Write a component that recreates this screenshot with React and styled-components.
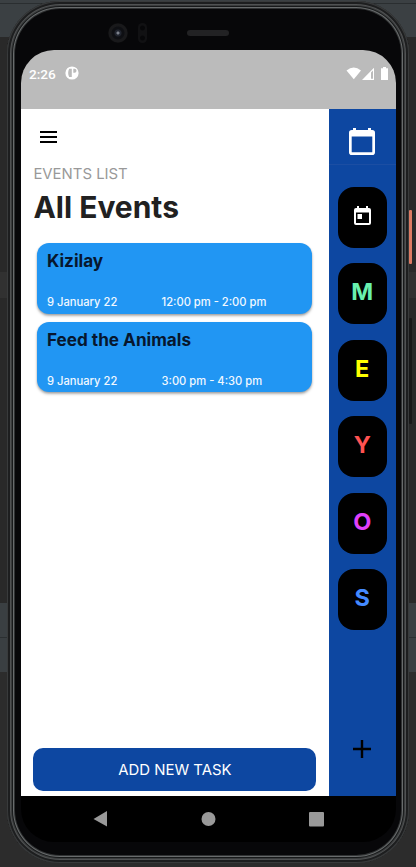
import React from 'react';
import styled, { createGlobalStyle } from 'styled-components';

const GlobalStyle = createGlobalStyle`
  * { box-sizing: border-box; }
  body { margin: 0; background: #2b2b2b; font-family: Inter, sans-serif; overflow: hidden; }
  h1, h2, p { margin: 0; }
  button { border: 0; padding: 0; font-family: inherit; }
`;

const Desktop = styled.div`
  position: relative;
  width: 416px;
  height: 867px;
  padding: 1px 7px 4px;
  background: linear-gradient(
    #3b4043 0 3px, #2a2e30 3px 4px, #3b4043 4px 37px, #292929 37px 272px,
    #313131 272px 298px, #292929 298px 603px, #3a3f42 603px 637px,
    #2b2f31 637px 638px, #3a3f42 638px 672px, #2c2c2c 672px
  );
`;

const SideKey = styled.span`
  position: absolute;
  left: ${(p) => p.$left}px;
  top: ${(p) => p.$top}px;
  width: ${(p) => p.$width}px;
  height: ${(p) => p.$height}px;
  background: ${(p) => p.$color};
  border-radius: 1px;
`;

const Phone = styled.div`
  position: relative;
  display: flex;
  flex-direction: column;
  width: 402px;
  height: 862px;
  padding: 0 13px 20px 14px;
  background: #070709;
  border-radius: 53px;
  box-shadow:
    inset 0 0 0 1px #393b3c,
    inset 0 0 0 3px #1d1e1f,
    inset 0 0 0 4px #505253,
    inset 0 0 0 5px #3a3c3d,
    inset 0 0 0 6px #17191a,
    inset 0 0 0 7px #686b6c,
    inset 0 0 0 8px #303233;
`;

const Bezel = styled.div`
  display: flex;
  align-items: center;
  height: 49px;
  padding: 15px 0 0 87px;
`;

const Camera = styled.span`
  width: 20px;
  height: 20px;
  border-radius: 50%;
  background: radial-gradient(circle, #7d828d 0 1px, #20242e 2px 3px, #0e0f13 4px 6px, #19191b 7px 9px, #0c0c0d 10px);
`;

const Sensor = styled.span`
  width: 9px;
  height: 20px;
  margin-left: 10px;
  border-radius: 5px;
  background: radial-gradient(circle at 50% 25%, #070709 0 2px, transparent 3px),
    radial-gradient(circle at 50% 75%, #070709 0 2px, transparent 3px), #111113;
`;

const Speaker = styled.span`
  width: 42px;
  height: 6px;
  margin-left: 40px;
  border-radius: 3px;
  background: #222224;
`;

const Screen = styled.div`
  display: flex;
  flex-direction: column;
  width: 375px;
  height: 792px;
  border-radius: 33px;
  overflow: hidden;
  background: #000;
`;

const StatusBar = styled.header`
  display: flex;
  align-items: flex-start;
  flex: 0 0 59px;
  padding: 16px 0 0 8px;
  background: #bbb;
  color: #fff;
  font: 500 13.6px/16px Roboto, sans-serif;
`;

const ParkingIcon = styled.svg`
  width: 14px;
  height: 14px;
  margin: 0 0 0 9.5px;
`;

const SystemIcons = styled.svg`
  width: 44px;
  height: 14px;
  margin: 1px 6px 0 auto;
`;

const AppBody = styled.div`
  display: flex;
  flex: 0 0 687px;
`;

const Main = styled.main`
  display: flex;
  flex-direction: column;
  width: 307.5px;
  padding: 22px 12px 5px 12.4px;
  background: #fff;
`;

const MenuIcon = styled.svg`
  flex: none;
  width: 18px;
  height: 12px;
  margin-left: 6.6px;
`;

const Overline = styled.p`
  margin: 21px 0 0 0;
  font-size: 14.9px;
  line-height: 20px;
  color: #999;
`;

const Title = styled.h1`
  margin: 5px 0 0 0;
  font-size: 30px;
  line-height: 36px;
  font-weight: 700;
  color: #212121;
`;

const EventList = styled.section`
  display: flex;
  flex-direction: column;
  gap: 8px;
  margin: 18px 4.6px 0 4.1px;
`;

const EventCard = styled.article`
  display: flex;
  flex-direction: column;
  justify-content: space-between;
  height: 70.5px;
  padding: 7px 9.5px 3.5px;
  border-radius: 12px;
  background: #2196f3;
  box-shadow: 0 2px 3px rgba(0, 0, 0, 0.28), 0 1px 2px rgba(0, 0, 0, 0.14);
`;

const EventName = styled.h2`
  font-size: 17.15px;
  line-height: 22px;
  font-weight: 700;
  color: #07172e;
`;

const EventMeta = styled.div`
  display: grid;
  grid-template-columns: 114.5px 1fr;
  font-size: 11.2px;
  line-height: 16px;
  font-weight: 500;
  color: #f0f8ff;
  white-space: nowrap;
`;

const AddTask = styled.button`
  width: 283px;
  height: 43px;
  margin-top: auto;
  border-radius: 10px;
  background: #0d47a1;
  color: #fff;
  font-size: 14.9px;
`;

const Sidebar = styled.aside`
  display: flex;
  flex-direction: column;
  align-items: center;
  flex: 1;
  background: #0d47a1;
`;

const SidebarHeader = styled.div`
  display: flex;
  justify-content: center;
  align-self: stretch;
  height: 56px;
  padding-top: 18px;
  border-bottom: 1px solid #1b4ea3;
`;

const Tiles = styled.nav`
  display: flex;
  flex-direction: column;
  gap: 15.4px;
  margin-top: 22px;
`;

const Tile = styled.button`
  display: flex;
  align-items: center;
  justify-content: center;
  width: 49px;
  height: 61px;
  padding-bottom: 4px;
  border-radius: 16px;
  background: #000;
  color: ${(p) => p.$color};
  font-size: 23.5px;
  font-weight: 700;
`;

const CalendarIcon = styled.svg`
  width: ${(p) => p.$width}px;
  height: ${(p) => p.$height}px;
`;

const PlusIcon = styled.svg`
  width: 18px;
  height: 18px;
  margin: auto 0 38px;
`;

const NavBar = styled.footer`
  display: flex;
  align-items: center;
  justify-content: space-between;
  height: 46px;
  padding: 0 72.5px 0 71.5px;
`;

const NavIcon = styled.svg`
  width: 15px;
  height: 16px;
  fill: #999;
`;

const events = [
  { name: 'Kizilay', date: '9 January 22', time: '12:00 pm - 2:00 pm' },
  { name: 'Feed the Animals', date: '9 January 22', time: '3:00 pm - 4:30 pm' },
];

const categories = [
  { letter: 'M', color: '#69f0ae' },
  { letter: 'E', color: '#ffff00' },
  { letter: 'Y', color: '#ff5252' },
  { letter: 'O', color: '#e040fb' },
  { letter: 'S', color: '#448aff' },
];

export default function App() {
  return (
    <>
      <GlobalStyle />
      <Desktop>
        <SideKey $left={409} $top={210} $width={3} $height={54} $color="#dd7b64" />
        <SideKey $left={409} $top={318} $width={3} $height={106} $color="#181818" />
        <Phone>
          <Bezel>
            <Camera />
            <Sensor />
            <Speaker />
          </Bezel>
          <Screen>
            <StatusBar>
              <span>2:26</span>
              <ParkingIcon viewBox="0 0 14 14">
                <circle cx="7" cy="7" r="6.6" fill="#fff" />
                <path d="M4.2 2.8h2.6v8.3H4.2c-1.4-2.5-1.4-5.8 0-8.3ZM8.3 2.8h1.2a2 2 0 0 1 0 4H8.3Z" fill="#bbb" />
              </ParkingIcon>
              <SystemIcons viewBox="0 0 44 14" fill="#fff">
                <path d="M.5 3.4Q7.8-2.4 15 3.4L7.8 12.3Z" />
                <path fillRule="evenodd" d="M28 .8V13H16ZM25 5.6V11.8H27V3.6Z" />
                <path d="M35 1.2h2V0h3v1.2h2V13h-7Z" />
              </SystemIcons>
            </StatusBar>
            <AppBody>
              <Main>
                <MenuIcon viewBox="0 0 18 12">
                  <path d="M0 0h17v2H0Zm0 5h17v2H0Zm0 5h17v2H0Z" />
                </MenuIcon>
                <Overline>EVENTS LIST</Overline>
                <Title>All Events</Title>
                <EventList>
                  {events.map((event) => (
                    <EventCard key={event.name}>
                      <EventName>{event.name}</EventName>
                      <EventMeta>
                        <span>{event.date}</span>
                        <span>{event.time}</span>
                      </EventMeta>
                    </EventCard>
                  ))}
                </EventList>
                <AddTask>ADD NEW TASK</AddTask>
              </Main>
              <Sidebar>
                <SidebarHeader>
                  <CalendarIcon $width={26} $height={29} viewBox="0 0 26 29" fill="#fff">
                    <path fillRule="evenodd" d="M4 1h3v2h12V1h3v2h1.2A2.8 2.8 0 0 1 26 5.8v19.4a2.8 2.8 0 0 1-2.8 2.8H2.8A2.8 2.8 0 0 1 0 25.2V5.8A2.8 2.8 0 0 1 2.8 3H4ZM2.7 9.5v15.8h20.6V9.5Z" />
                  </CalendarIcon>
                </SidebarHeader>
                <Tiles>
                  <Tile $color="#fff" aria-label="Today">
                    <CalendarIcon $width={17} $height={19} viewBox="0 0 17 19" fill="#fff">
                      <path fillRule="evenodd" d="M3 0h2v2h7V0h2v2h1a2 2 0 0 1 2 2v13a2 2 0 0 1-2 2H2a2 2 0 0 1-2-2V4a2 2 0 0 1 2-2h1ZM2 6.5V17h13V6.5Z" />
                      <path d="M3.5 8H8v5H3.5Z" />
                    </CalendarIcon>
                  </Tile>
                  {categories.map((category) => (
                    <Tile key={category.letter} $color={category.color}>{category.letter}</Tile>
                  ))}
                </Tiles>
                <PlusIcon viewBox="0 0 18 18">
                  <path d="M7.8 0h2.4v7.8H18v2.4h-7.8V18H7.8v-7.8H0V7.8h7.8Z" />
                </PlusIcon>
              </Sidebar>
            </AppBody>
            <NavBar>
              <NavIcon viewBox="0 0 15 16"><path d="M.5 8 14 0v15.5Z" /></NavIcon>
              <NavIcon viewBox="0 0 15 16"><circle cx="7.5" cy="8" r="7" /></NavIcon>
              <NavIcon viewBox="0 0 15 16"><rect y="1" width="15" height="14.5" rx="1" /></NavIcon>
            </NavBar>
          </Screen>
        </Phone>
      </Desktop>
    </>
  );
}
